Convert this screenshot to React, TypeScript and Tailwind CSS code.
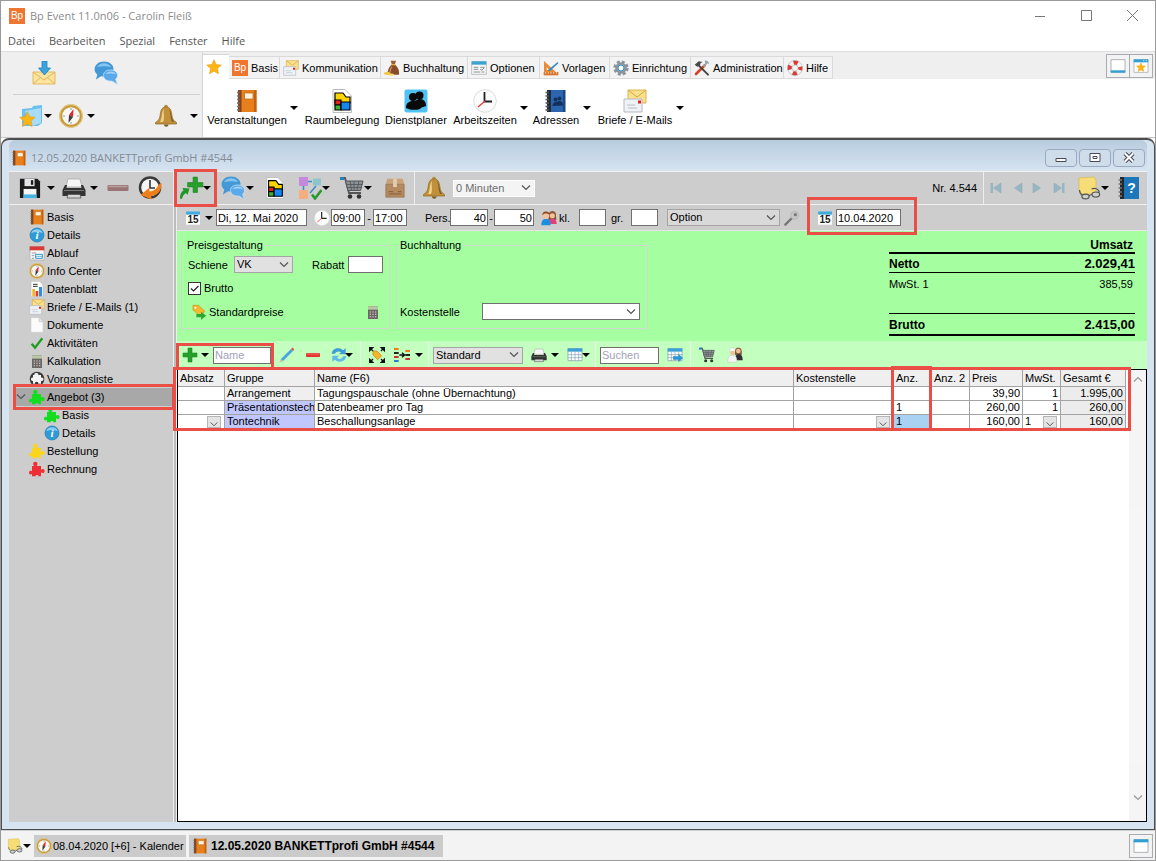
import type { ReactNode } from 'react'
import clsx from 'clsx'

// ── Icons ─────────────────────────────────────────────────────

interface IconProps {
  className?: string
}

function Svg({ className = 'size-4', box = '0 0 24 24', children }: IconProps & { box?: string; children: ReactNode }) {
  return (
    <svg viewBox={box} className={clsx('shrink-0', className)} fill="none" aria-hidden="true">
      {children}
    </svg>
  )
}

function BpLogo() {
  return (
    <span className="flex size-4 shrink-0 items-center justify-center overflow-hidden bg-[#ee7631] text-[10px] leading-4 text-white" aria-hidden="true">
      Bp
    </span>
  )
}

function MailDown({ className }: IconProps) {
  return (
    <Svg className={className}>
      <path d="M1 11h22v12H1z" fill="#fbe3a0" stroke="#e3bb5c" />
      <path d="M1 23l8-7M23 23l-8-7M1 11l11 8 11-8" stroke="#dfb65c" />
      <path d="M10 0h5v7h3.500l-6 7-6-7H10z" fill="#3ba3dc" stroke="#2383bb" strokeWidth=".8" />
    </Svg>
  )
}

function Chat({ className }: IconProps) {
  return (
    <Svg className={className}>
      <path d="M10 .500c5.500 0 9.500 3.200 9.500 7.500s-4 7.700-9.500 7.700c-1 0-2-.1-3-.4L2 18.500l1.300-5C1.700 12.200.600 10.500.600 8.500c0-4.500 4-8 9.400-8z" fill="#4398d6" />
      <path d="M3 6c2-4.500 11-5.500 14 0-4-1-9-1-14 0z" fill="#86c5ee" />
      <path d="M16.500 9c4 0 7 2.200 7 5.300 0 1.700-.9 3-2 4L23.500 23.500l-5.500-3.400c-5 .3-8.500-2-8.500-5.700S12.500 9 16.500 9z" fill="#5aa9ea" stroke="#cfe6f7" strokeWidth=".7" />
      <path d="M11.500 13c2-3 8-3.500 10.500 0-4-.8-7-.8-10.500 0z" fill="#a0d0f5" />
    </Svg>
  )
}

function StarShape({ fill = '#fbb615' }: { fill?: string }) {
  return <path d="M12 1l3.300 7.200 7.700.9-5.700 5.300 1.500 7.800L12 18.400l-6.800 3.800 1.500-7.800L1 9.100l7.700-.9z" fill={fill} stroke="#e39a12" strokeWidth=".8" />
}

function Star({ className }: IconProps) {
  return <Svg className={className}><StarShape /></Svg>
}

function StarFolder({ className }: IconProps) {
  return (
    <Svg className={className}>
      <path d="M3 5l10-1 1-2 9-1v18l-4 3H3z" fill="#6cc0ee" />
      <path d="M6 7l16-3v15l-9 3z" fill="#a9dcf7" />
      <g transform="translate(0 7) scale(.7)"><StarShape /></g>
    </Svg>
  )
}

function Compass({ className }: IconProps) {
  return (
    <Svg className={className}>
      <circle cx="12" cy="12" r="10.300" fill="#f7f7f4" stroke="#c79b3c" strokeWidth="3" />
      <circle cx="12" cy="12" r="11.400" stroke="#e9cf8e" />
      <path d="M12 4v2M12 18v2M4 12h2M18 12h2" stroke="#999" />
      <path d="M14.500 5l-.5 8-4-2z" fill="#e0252b" />
      <path d="M10 11l4 2-4.500 6z" fill="#3c3c3c" />
    </Svg>
  )
}

function Bell({ className }: IconProps) {
  return (
    <Svg className={className}>
      <circle cx="12" cy="2.500" r="1.800" fill="#b98b33" />
      <path d="M12 3c5 0 5.500 5 6 9 .3 3 2 5 4.500 6.500v1.500h-21v-1.500C4 17 5.700 15 6 12c.5-4 1-9 6-9z" fill="#c0903a" stroke="#8c6422" strokeWidth=".7" />
      <path d="M10 5c-2.500 2-1.500 9-4 13h3c2-4 0-9 1-13z" fill="#f0d48c" />
      <path d="M15 5c2 4 1 9 3 13h2c-3-3-2-10-5-13z" fill="#7d5a1f" />
      <path d="M10 20.500h4.500c0 3-4.500 3-4.500 0z" fill="#7d5a1f" />
    </Svg>
  )
}

function Mails({ className }: IconProps) {
  return (
    <Svg className={className}>
      <path d="M5 1h18v13H5z" fill="#fbe08c" stroke="#dcb24e" />
      <path d="M5 1l9 7 9-7" stroke="#cfa544" />
      <path d="M1 10h18v13H1z" fill="#eef1f5" stroke="#b5b9c0" />
      <path d="M15 11.500h3v3h-3z" fill="#dd2222" />
      <path d="M4 16h8M5 19h9" stroke="#bcc2ca" />
    </Svg>
  )
}

function MoneyBag({ className }: IconProps) {
  return (
    <Svg className={className}>
      <path d="M10 1h8l-1.500 5h-5z" fill="#9b5d34" />
      <path d="M11 7h6c4 4 6.500 9 5.500 15h-17C5 16 7 11 11 7z" fill="#8a4b28" />
      <path d="M11 6h6v2h-6z" fill="#e2b23b" />
      <path d="M12 10c-2 2-3 5-3 8" stroke="#c58a5e" strokeWidth="2" />
      <ellipse cx="5" cy="20" rx="5" ry="2.500" fill="#f5c842" />
      <ellipse cx="11" cy="22" rx="4" ry="1.800" fill="#f9dc77" />
    </Svg>
  )
}

function OptionsWindow({ className }: IconProps) {
  return (
    <Svg className={className}>
      <path d="M1 2.500h22v19H1z" fill="#f7f7f7" stroke="#9fa8ae" />
      <path d="M1 2h22v5H1z" fill="#3ba2d4" />
      <path d="M4 11h7M4 14h7M4 18h10M14 11h6M16 18h4" stroke="#8a9298" strokeWidth="1.500" />
      <path d="M14 13.500l2 2 4-4" stroke="#4b4b4b" />
    </Svg>
  )
}

function Rulers({ className }: IconProps) {
  return (
    <Svg className={className}>
      <path d="M1.500 1.500v17h18z" fill="#ec8a32" />
      <path d="M5.500 11v4h4z" fill="#fff" />
      <path d="M22 3L9 14l-2 3 4-1L23 5z" fill="#3489c9" />
      <path d="M1 18h22v5H1z" fill="#d8752a" />
      <path d="M4 18v2.500M8 18v2.500M12 18v2.500M16 18v2.500M20 18v2.500" stroke="#fff" />
    </Svg>
  )
}

function Gear({ className }: IconProps) {
  return (
    <Svg className={className}>
      <circle cx="12" cy="12" r="9.500" stroke="#8a949d" strokeWidth="4" strokeDasharray="4.460 3" />
      <circle cx="12" cy="12" r="7" fill="#aab4bd" stroke="#8a949d" strokeWidth="3.500" />
      <circle cx="12" cy="12" r="4.500" fill="#f6f8fa" stroke="#3889c4" strokeWidth="1.500" />
    </Svg>
  )
}

function Tools({ className }: IconProps) {
  return (
    <Svg className={className}>
      <path d="M3 21L16 8" stroke="#d5422a" strokeWidth="4" strokeLinecap="round" />
      <path d="M13 9l4-4-1-4c3-.5 6 1 7 5l-3-1-4 6z" fill="#9aa1a6" />
      <path d="M7 8l14 14" stroke="#454545" strokeWidth="3" strokeLinecap="round" />
      <path d="M1 7l6-5 6 1-3 1.500L9 8l-4 2z" fill="#4a4a4a" />
    </Svg>
  )
}

function Lifebuoy({ className }: IconProps) {
  return (
    <Svg className={className}>
      <circle cx="12" cy="12" r="8" stroke="#f2f2f2" strokeWidth="6.500" />
      <circle cx="12" cy="12" r="8" stroke="#dc3a33" strokeWidth="6.500" strokeDasharray="6.280 6.280" strokeDashoffset="3.140" />
      <circle cx="12" cy="12" r="11.300" stroke="#a9a9a9" strokeWidth=".8" />
      <circle cx="12" cy="12" r="4.700" stroke="#a9a9a9" strokeWidth=".8" />
    </Svg>
  )
}

function OrangeBook({ className }: IconProps) {
  return (
    <Svg className={className}>
      <path d="M3 1h18.500v22H3z" fill="#e77f1c" />
      <path d="M19 1h2.500v22H19z" fill="#c4620f" />
      <path d="M3 1h3.500v22H3z" fill="#84411a" />
      <path d="M9.500 4h8.500v6H9.500z" fill="#fff3dc" stroke="#b06a24" strokeWidth=".7" />
      <path d="M2 3.500h3M2 7h3M2 10.500h3M2 14h3M2 17.500h3M2 21h3" stroke="#6e6e6e" strokeWidth="1.300" />
    </Svg>
  )
}

function RoomDoc({ className }: IconProps) {
  return (
    <Svg className={className}>
      <path d="M3 .500h12l6.500 6.500v16.500H3z" fill="#fff" stroke="#bdbdbd" />
      <path d="M5 4h8l3 4h4v6H5z" fill="#ffd400" stroke="#000" strokeWidth="1.200" />
      <path d="M5 11h6v5H5z" fill="#e2231a" stroke="#000" strokeWidth="1.200" />
      <path d="M5 16h6v5H5z" fill="#3fb135" stroke="#000" strokeWidth="1.200" />
      <path d="M11 13h9v8h-9z" fill="#1487f0" stroke="#000" strokeWidth="1.200" />
    </Svg>
  )
}

function PeopleTile({ className }: IconProps) {
  return (
    <Svg className={className}>
      <rect x=".5" y=".5" width="23" height="23" rx="2" fill="#4fc1f3" />
      <circle cx="9" cy="8" r="4" fill="#0a0a0a" />
      <circle cx="15.500" cy="6.500" r="4" fill="#0a0a0a" />
      <path d="M2 19c0-5 3-7 7-7s4-2 7-2c4 0 6 3 6 7-3 1.500-5 1-6 3-5 1.500-10 1-14-1z" fill="#0a0a0a" />
    </Svg>
  )
}

function Clock({ className }: IconProps) {
  return (
    <Svg className={className}>
      <circle cx="12" cy="12" r="11.300" fill="#fdfdfd" stroke="#dcdcdc" />
      <path d="M11.500 3v9.500H19" stroke="#222" strokeWidth="1.800" />
      <path d="M12 12l-7 6" stroke="#e23b3b" strokeWidth="1.300" />
    </Svg>
  )
}

function AddressBook({ className }: IconProps) {
  return (
    <Svg className={className}>
      <path d="M3 1h18v22H3z" fill="#2b65b0" />
      <path d="M3 1h4v22H3z" fill="#222b38" />
      <path d="M19 1h2.500v22H19z" fill="#1b4683" />
      <path d="M1.500 3.500H5M1.500 7H5M1.500 10.500H5M1.500 14H5M1.500 17.500H5M1.500 21H5" stroke="#555" strokeWidth="1.300" />
      <circle cx="11.500" cy="10.500" r="2" fill="#12305c" />
      <circle cx="15.500" cy="9.500" r="2" fill="#12305c" />
      <path d="M8.500 17c0-3 1.500-4 3.500-4l3-1c3 0 4 2 4 4.500z" fill="#12305c" />
    </Svg>
  )
}

function WindowPane({ className, foot }: IconProps & { foot?: boolean }) {
  return (
    <Svg className={className}>
      <path d="M1.500 2.500h21v19h-21z" fill="#fff" stroke="#9a9fa5" strokeWidth="1.200" />
      <path d={foot ? 'M1 18.500h22V22H1z' : 'M1 2h22v4.500H1z'} fill="#2f9fd4" />
    </Svg>
  )
}

function WindowStar({ className }: IconProps) {
  return (
    <Svg className={className}>
      <path d="M1.500 2.500h21v19h-21z" fill="#fff" stroke="#9a9fa5" />
      <path d="M1 2h22v4.500H1z" fill="#2f9fd4" />
      <path d="M15 4h2M19 4h2" stroke="#fff" />
      <g transform="translate(4.500 6.500) scale(.62)"><StarShape /></g>
    </Svg>
  )
}

function Save({ className }: IconProps) {
  return (
    <Svg className={className}>
      <path d="M1 2h19l3 3v18H1z" fill="#1b1b1b" />
      <path d="M6 2h11v8H6z" fill="#e3e5e6" />
      <path d="M13 3.500h2.500v5H13z" fill="#1b1b1b" />
      <path d="M5 13h14v10H5z" fill="#f5f5f5" />
      <path d="M5 19h14v4H5z" fill="#45b3e4" />
    </Svg>
  )
}

function Printer({ className }: IconProps) {
  return (
    <Svg className={className}>
      <path d="M6 3h12l2 8H4z" fill="#f7f7f7" stroke="#a9a9a9" strokeWidth=".8" />
      <path d="M3 9h2l-.5 3h15L19 9h2l2.500 5v6H.500v-6z" fill="#333" />
      <path d="M2 14.500h20" stroke="#777" />
      <path d="M6 18.500h12l1 3.500H5z" fill="#d6d6d6" stroke="#555" strokeWidth=".8" />
    </Svg>
  )
}

function Bar({ className, fill }: IconProps & { fill: string }) {
  return (
    <Svg className={className}>
      <rect x="1.500" y="9" width="21" height="6" rx="1.200" fill={fill} />
      <path d="M2.500 10.500h19" stroke="#fff" strokeOpacity=".3" strokeWidth="1.500" />
    </Svg>
  )
}

function HistoryClock({ className }: IconProps) {
  return (
    <Svg className={className}>
      <circle cx="12" cy="11.500" r="10" fill="#f5f5f5" stroke="#3a3a3a" strokeWidth="2.500" />
      <path d="M12 4v8h5" stroke="#333" strokeWidth="1.600" />
      <path d="M23.500 7c.5 8-4 12.500-10.500 13l1 3.500L2.500 19 11 12l.7 3.500c4-.5 7.300-2.500 8.300-6.500z" fill="#ee7d1a" />
    </Svg>
  )
}

function PlusShape() {
  return <path d="M9 1.500h6V9h7.500v6H15v7.500H9V15H1.500V9H9z" fill="#27a02b" stroke="#148018" strokeWidth=".8" />
}

function Plus({ className }: IconProps) {
  return <Svg className={className}><PlusShape /></Svg>
}

function PlusArrow({ className }: IconProps) {
  return (
    <Svg className={className}>
      <g transform="translate(6.500 0) scale(.73)"><PlusShape /></g>
      <path d="M0 22.500c0-4 1-6.500 3.500-8L2.500 12l7 .5-2 6.500-1.500-2C4 18 2.500 20 2 23z" fill="#1f9724" />
    </Svg>
  )
}

function Flow({ className }: IconProps) {
  return (
    <Svg className={className}>
      <path d="M1 1h9v9H1z" fill="#c489dd" />
      <path d="M15 2.500h8v7h-8z" fill="#8fc4cf" />
      <path d="M1 14h9v9H1z" fill="#f4ad7e" />
      <path d="M10 5.500h4M5.500 10v4M18 10l-6 7" stroke="#3b8fc4" strokeWidth="1.600" />
      <path d="M14 18.500l3 4L23.500 14" stroke="#25992b" strokeWidth="2.500" />
    </Svg>
  )
}

function Cart({ className }: IconProps) {
  return (
    <Svg className={className}>
      <path d="M1 2h4l4 15h12" stroke="#555" strokeWidth="1.800" />
      <path d="M5.500 5H23l-2.500 9.500H8z" fill="#8d9296" stroke="#555" />
      <path d="M10 5l1.500 9M14 5v9M19 5l-2 9M6.500 8.500h16M7.500 11.500h14" stroke="#4e5357" strokeWidth=".8" />
      <path d="M0 1h4v3H0z" fill="#267fb6" />
      <circle cx="10" cy="20.500" r="2.300" fill="#333" />
      <circle cx="19" cy="20.500" r="2.300" fill="#333" />
    </Svg>
  )
}

function Box({ className }: IconProps) {
  return (
    <Svg className={className}>
      <path d="M3.500 2h17L22 8H2z" fill="#c9a27a" />
      <path d="M2 8h20v14H2z" fill="#b58a60" stroke="#916a43" strokeWidth=".7" />
      <path d="M10 2h4v9h-4z" fill="#e4cdb0" />
      <path d="M5 16h5M5 18.500h14M15 16h4" stroke="#7e5a36" />
    </Svg>
  )
}

function Calendar15({ className }: IconProps) {
  return (
    <Svg className={className}>
      <path d="M1.500 2h21v20h-21z" fill="#fff" />
      <path d="M1.500 2h21v5h-21z" fill="#45a9da" />
      <text x="12" y="20" textAnchor="middle" fontSize="15" fontWeight="700" fontFamily="Liberation Sans, sans-serif" fill="#222">15</text>
    </Svg>
  )
}

function People({ className }: IconProps) {
  return (
    <Svg className={className}>
      <path d="M11.500 8c0-9 12-8 11 0l.5 7h-12z" fill="#8d5534" />
      <circle cx="17" cy="8.500" r="3.800" fill="#f1c39c" />
      <path d="M11 21c0-6 2-8 6-8s6.500 2 6.500 8z" fill="#e33f7f" />
      <circle cx="7.500" cy="8" r="5" fill="#f1c39c" />
      <path d="M2 8C1 1 14 0 13 8c-2-3-8-4-11 0z" fill="#8e4a22" />
      <path d="M.500 23c0-7 2-9.500 7-9.500s7 2.500 7 9.500z" fill="#1e8fe0" />
    </Svg>
  )
}

function Pin({ className }: IconProps) {
  return (
    <Svg className={className}>
      <path d="M2 22L12 12" stroke="#777" strokeWidth="3.500" strokeLinecap="round" />
      <circle cx="16" cy="8" r="6" fill="#c6c6c6" stroke="#adadad" />
      <circle cx="17" cy="7" r="2.500" fill="#7c7c7c" />
    </Svg>
  )
}

function Notes({ className }: IconProps) {
  return (
    <Svg className={className}>
      <path d="M2 2l15-1 2 3v13l-5 1H5l-3-3z" fill="#f7dd78" stroke="#d8b84a" strokeWidth=".7" />
      <path d="M2.500 14c0 2 1 4 3 5.500M22.500 16.500c-1-4-5-5-8-3.500M12 20c1-1 2-1.500 3-1.500" stroke="#555" strokeWidth="1.200" />
      <ellipse cx="8.500" cy="20.500" rx="3.600" ry="2.400" fill="#cfcfcf" stroke="#555" strokeWidth="1.200" />
      <ellipse cx="18.800" cy="18.500" rx="3.800" ry="2.500" fill="#cfcfcf" stroke="#555" strokeWidth="1.200" />
    </Svg>
  )
}

function HelpBook({ className }: IconProps) {
  return (
    <Svg className={className}>
      <path d="M3 1h19v22H3z" fill="#1c76ba" />
      <path d="M3 1h4v22H3z" fill="#23282e" />
      <path d="M1.500 4H5M1.500 8H5M1.500 12H5M1.500 16H5M1.500 20H5" stroke="#777" strokeWidth="1.300" />
      <text x="14.500" y="16.500" textAnchor="middle" fontSize="14" fontWeight="700" fontFamily="Liberation Sans, sans-serif" fill="#fff">?</text>
    </Svg>
  )
}

function NavArrow({ flip, end }: { flip?: boolean; end?: boolean }) {
  return (
    <Svg className={clsx('size-3', flip && 'rotate-180')}>
      <path d="M2 2l15 10L2 22z" fill="#97b6c4" stroke="#86a8b8" />
      {end && <path d="M18 2h5v20h-5z" fill="#97b6c4" />}
    </Svg>
  )
}

function Info({ className }: IconProps) {
  return (
    <Svg className={className}>
      <circle cx="12" cy="12" r="10.500" fill="#2f9bd6" stroke="#1a79b0" />
      <path d="M3.500 9C5.500 1.500 18.500 1.500 20.500 9c-5-2-12-2-17 0z" fill="#8fd0f2" />
      <text x="12" y="18" textAnchor="middle" fontSize="17" fontStyle="italic" fontWeight="700" fontFamily="Liberation Serif, serif" fill="#fff">i</text>
    </Svg>
  )
}

function Agenda({ className }: IconProps) {
  return (
    <Svg className={className}>
      <path d="M1.500 2.500h21v20h-21z" fill="#fafafa" stroke="#a9a9a9" />
      <path d="M1 2h22v6H1z" fill="#d83a3a" />
      <path d="M4 12h7M4 16h4M4 20h4" stroke="#999" strokeWidth="1.500" />
      <path d="M10 14h10v6H10z" stroke="#3196d0" strokeWidth="1.500" />
      <path d="M10 17h10" stroke="#3196d0" />
    </Svg>
  )
}

function DataSheet({ className }: IconProps) {
  return (
    <Svg className={className}>
      <path d="M3 .500h13l5 5v18H3z" fill="#fff" stroke="#bcbcbc" />
      <path d="M6 5h7M6 8h7" stroke="#333" strokeWidth="1.500" />
      <path d="M5 12h4v11H5z" fill="#f6b21b" />
      <path d="M10 15h4v8h-4z" fill="#dd3b2f" />
      <path d="M15 9h4.500v14H15z" fill="#2e91d6" />
    </Svg>
  )
}

function Page({ className }: IconProps) {
  return (
    <Svg className={className}>
      <path d="M3 1h12l6 6v16H3z" fill="#fbfbfb" stroke="#d0d0d0" />
      <path d="M15 1v6h6" fill="#e4e4e4" stroke="#c5c5c5" />
    </Svg>
  )
}

function Check({ className }: IconProps) {
  return <Svg className={className}><path d="M4 13l5 6L20 5" stroke="#1f9c25" strokeWidth="3.500" /></Svg>
}

function Calculator({ className }: IconProps) {
  return (
    <Svg className={className}>
      <path d="M4.500 3.500h15v19h-15z" fill="#6b6664" />
      <path d="M4.500 3.500h15v5h-15z" fill="#b9c7a4" />
      <path d="M7 12h2M11 12h2M15 12h2M7 15.500h2M11 15.500h2M15 15.500h2M7 19h2M11 19h2M15 19h2" stroke="#d8d4d0" strokeWidth="1.600" />
    </Svg>
  )
}

function PuzzleBall({ className }: IconProps) {
  return (
    <Svg className={className}>
      <circle cx="12" cy="12" r="11" fill="#3a3a3a" />
      <path d="M8 6c-1-4 7-4 6 0h4v4c5-1 5 6 0 5v4h-4c1-4-6-4-5 0H6v-4c-4 1-4-6 0-5V6z" fill="#f3f3f3" />
    </Svg>
  )
}

function Puzzle({ className, fill }: IconProps & { fill: string }) {
  return (
    <Svg className={className}>
      <path
        d="M4.500 7.500H8C5.500 5.500 5.500 1 9.500 1s4 4.500 1.800 6.500H18V13c2.500-2 5.500-1 5.500 2s-3 4-5.500 2v6h-4c.5-2.500-4.500-2.500-4 0H4.500v-3.500c-2 1.500-4.500.5-4.500-2s2.500-3.500 4.500-2z"
        fill={fill}
      />
    </Svg>
  )
}

function TagArrow({ className }: IconProps) {
  return (
    <Svg className={className}>
      <path d="M3 2h8l10 9-7 7L3 9z" fill="#f5b92e" stroke="#c98d1d" />
      <circle cx="6.500" cy="5.500" r="1.500" fill="#fff" />
      <path d="M8 15h7v-3.500l8 6-8 6V20H8z" fill="#2fa636" />
    </Svg>
  )
}

function Pencil({ className }: IconProps) {
  return (
    <Svg className={className}>
      <path d="M1 23l2-5L18 3l3 3L6 21z" fill="#4aa3de" />
      <path d="M1 23l2-5 3 3z" fill="#e6c89a" />
      <path d="M18 3l1.500-1.500C20.500.500 23.500 3.500 22.500 4.500L21 6z" fill="#d9574b" />
    </Svg>
  )
}

function Refresh({ className }: IconProps) {
  return (
    <Svg className={className}>
      <path d="M1 10C2 1 14 0 18 5l4-3v9H12l3-3C12 6 8 6 6 10z" fill="#3d9fd6" />
      <path d="M23 14c-1 9-13 10-17 5l-4 3v-9h10l-3 3c3 3 7 3 9-2z" fill="#62b8e6" />
    </Svg>
  )
}

function ExpandTag({ className }: IconProps) {
  return (
    <Svg className={className}>
      <path d="M6 6h6l7 7-6 6-7-7z" fill="#f2b52b" stroke="#bf8415" />
      <path d="M0 0h8L0 8zM24 0v8l-8-8zM0 24v-8l8 8zM24 24h-8l8-8z" fill="#111" />
      <path d="M2 2l4 4M22 2l-4 4M2 22l4-4M22 22l-4-4" stroke="#111" strokeWidth="2" />
    </Svg>
  )
}

function ColumnsIcon({ className }: IconProps) {
  return (
    <Svg className={className}>
      <path d="M0 3h7M17 6h7" stroke="#ee7d1a" strokeWidth="3" />
      <path d="M0 9h7M17 12h7" stroke="#222" strokeWidth="3" />
      <path d="M0 15h7M17 18h7" stroke="#c83737" strokeWidth="3" />
      <path d="M0 21h7" stroke="#2b7fc4" strokeWidth="3" />
      <path d="M8 12h8M12 8.500L16 12l-4 3.500" stroke="#111" strokeWidth="2" />
    </Svg>
  )
}

function GridIcon({ className, arrow }: IconProps & { arrow?: boolean }) {
  return (
    <Svg className={className}>
      <path d="M1.500 2.500h21v18h-21z" fill="#fff" stroke="#7d98a8" />
      <path d="M1 2h22v5H1z" fill="#3c9fd5" />
      <path d="M1 11.500h22M1 16h22M6.500 7v14M12 7v14M17.500 7v14" stroke="#7fa3b8" />
      {arrow && <path d="M9 14h8v-4l7 6.500-7 6.500v-4H9z" fill="#2f96d6" />}
    </Svg>
  )
}

function Staff({ className }: IconProps) {
  return (
    <Svg className={className}>
      <path d="M12 12c-1-9 1-11 5-11s6 2 5 11z" fill="#8d5a37" />
      <circle cx="17" cy="6" r="3.500" fill="#edc29c" />
      <path d="M12 20c0-7 2-9 5.500-9s6 2 6 9z" fill="#2e2e34" />
      <path d="M4 4c-1-4 9-4 8 0v3H4z" fill="#fafafa" stroke="#bbb" strokeWidth=".6" />
      <circle cx="8" cy="9" r="3.300" fill="#edc29c" />
      <path d="M1 23c0-8 2-10.500 7-10.500S15 15 15 23z" fill="#f3f3f3" stroke="#bbb" strokeWidth=".6" />
    </Svg>
  )
}

// ── Shared controls ───────────────────────────────────────────

function Caret({ className }: IconProps) {
  return (
    <Svg box="0 0 8 4" className={clsx('h-1 w-2', className)}>
      <path d="M0 0h8L4 4z" fill="#000" />
    </Svg>
  )
}

function Chevron({ className }: IconProps) {
  return (
    <Svg box="0 0 10 6" className={clsx('h-1.5 w-2.5', className)}>
      <path d="M1 .500l4 4 4-4" stroke="#555" strokeWidth="1.200" />
    </Svg>
  )
}

// Red frame drawn over the control it highlights
function Mark({ className }: IconProps) {
  return <span className={clsx('pointer-events-none absolute z-10 border-3 border-[#e94f47]', className)} />
}

function Tool({ label, className, children }: { label: string; className?: string; children: ReactNode }) {
  return (
    <button aria-label={label} className={clsx('flex shrink-0 items-center', className)}>
      {children}
    </button>
  )
}

function Sep({ className }: IconProps) {
  return <span className={clsx('w-px self-stretch bg-[#ededed]', className)} />
}

function Field({ label, value, className, placeholder }: { label: string; value?: string; className?: string; placeholder?: string }) {
  return (
    <input
      type="text"
      aria-label={label}
      defaultValue={value}
      placeholder={placeholder}
      className={clsx('h-[17px] shrink-0 border border-[#707070] bg-white px-px leading-none placeholder:text-[#a39fbd]', className)}
    />
  )
}

function Select({ label, value, className, tone = 'border-[#a5a5a5] bg-[#e1e1e1]' }: { label: string; value: string; className?: string; tone?: string }) {
  return (
    <span className={clsx('relative flex shrink-0 items-center', className)}>
      <select aria-label={label} className={clsx('h-[17px] w-full appearance-none border px-0.5 leading-none', tone)}>
        <option>{value}</option>
      </select>
      <Chevron className="pointer-events-none absolute right-1" />
    </span>
  )
}

// ── Title, menu and ribbon ────────────────────────────────────

const MENU = ['Datei', 'Bearbeiten', 'Spezial', 'Fenster', 'Hilfe']

const TABS = [
  { label: 'Basis', icon: <BpLogo />, width: 'w-[51px]' },
  { label: 'Kommunikation', icon: <Mails />, width: 'w-[101px]' },
  { label: 'Buchhaltung', icon: <MoneyBag />, width: 'w-[87px]' },
  { label: 'Optionen', icon: <OptionsWindow />, width: 'w-[72px]' },
  { label: 'Vorlagen', icon: <Rulers />, width: 'w-[70px]' },
  { label: 'Einrichtung', icon: <Gear />, width: 'w-[81px]' },
  { label: 'Administration', icon: <Tools />, width: 'w-[93px]' },
  { label: 'Hilfe', icon: <Lifebuoy />, width: 'w-[49px]' },
]

const RIBBON = [
  { label: 'Veranstaltungen', icon: <OrangeBook className="size-6" />, width: 'w-[80px]', menu: true, gap: '' },
  { label: 'Raumbelegung', icon: <RoomDoc className="size-6" />, width: 'w-[76px]', menu: false, gap: 'ml-1.5' },
  { label: 'Dienstplaner', icon: <PeopleTile className="size-6" />, width: 'w-[62px]', menu: false, gap: 'ml-[5px]' },
  { label: 'Arbeitszeiten', icon: <Clock className="size-6" />, width: 'w-[64px]', menu: true, gap: 'ml-1.5' },
  { label: 'Adressen', icon: <AddressBook className="size-6" />, width: 'w-[48px]', menu: true, gap: 'ml-1' },
  { label: 'Briefe / E-Mails', icon: <Mails className="size-6" />, width: 'w-[76px]', menu: true, gap: 'ml-1.5' },
]

function TitleBar() {
  return (
    <header>
      <div className="flex h-[29px] items-center pl-2 text-[#8c8c8c]">
        <BpLogo />
        <h1 className="ml-[5px] flex-1 font-['Open_Sans',sans-serif]">Bp Event 11.0n06 - Carolin Fleiß</h1>
        <button aria-label="Minimieren" className="flex w-[46px] justify-center">
          <Svg box="0 0 10 10" className="size-2.5"><path d="M0 5.500h10" stroke="#777" /></Svg>
        </button>
        <button aria-label="Maximieren" className="flex w-[46px] justify-center">
          <Svg box="0 0 11 11" className="size-[11px]"><path d="M.500.500h10v10H.500z" stroke="#777" /></Svg>
        </button>
        <button aria-label="Schließen" className="flex w-[46px] justify-center">
          <Svg box="0 0 11 11" className="size-[11px]"><path d="M0 0l11 11M11 0L0 11" stroke="#777" /></Svg>
        </button>
      </div>
      <nav className="flex h-[22px] items-center gap-3.5 border-b border-[#dedede] pl-[7px] font-['Open_Sans',sans-serif] text-[#555]">
        {MENU.map(m => <button key={m}>{m}</button>)}
      </nav>
    </header>
  )
}

function QuickPanel() {
  return (
    <div className="w-[201px] shrink-0 bg-[#efefef] pl-3 pr-0.5">
      <div className="flex h-[43px] items-center border-b border-[#cfcfcf] pl-[19px]">
        <Tool label="Posteingang"><MailDown className="size-6" /></Tool>
        <Tool label="Chat" className="ml-[38px]"><Chat className="size-6" /></Tool>
      </div>
      <div className="flex h-[42px] items-center pl-1.5">
        <Tool label="Favoriten" className="gap-px"><StarFolder className="size-6" /><Caret /></Tool>
        <Tool label="Kompass" className="ml-[7px] gap-1"><Compass className="size-6" /><Caret /></Tool>
        <Tool label="Erinnerungen" className="ml-auto gap-3 pr-0.5"><Bell className="size-6" /><Caret /></Tool>
      </div>
    </div>
  )
}

function Ribbon() {
  return (
    <div className="flex border-b border-[#c4c4c4] bg-[#efefef]">
      <QuickPanel />
      <div className="flex min-w-0 flex-1 flex-col border-l border-[#d5d5d5]">
        <div className="flex h-[27px] items-end pt-0.5">
          <button aria-label="Favoriten" className="flex h-[25px] w-[26px] items-center justify-center border-t border-[#d5d5d5] bg-white pr-1">
            <Star />
          </button>
          {TABS.map(t => (
            <button
              key={t.label}
              className={clsx('flex h-[23px] shrink-0 items-center gap-[3px] whitespace-nowrap border border-l-0 border-[#dadada] bg-[#f3f3f3] pl-[3px]', t.width)}
            >
              {t.icon}
              {t.label}
            </button>
          ))}
          <div className="ml-auto mr-0.5 flex self-start">
            <Tool label="Leiste unten" className="size-6 justify-center border border-[#a9abb0] bg-[#f3f3f3]"><WindowPane foot /></Tool>
            <Tool label="Fensterfavorit" className="-ml-px size-6 justify-center border border-[#a9abb0] bg-[#f3f3f3]"><WindowStar /></Tool>
          </div>
        </div>
        <div className="flex flex-1 items-center bg-white pl-1">
          {RIBBON.map(r => (
            <div key={r.label} className={clsx('flex items-center', r.gap)}>
              <button className={clsx('flex flex-col items-center whitespace-nowrap leading-3.5', r.width)}>
                {r.icon}
                {r.label}
              </button>
              {r.menu && <Caret className="ml-[3px]" />}
            </div>
          ))}
        </div>
      </div>
    </div>
  )
}

// ── Event window: toolbars ────────────────────────────────────

function WindowTitle() {
  const button = 'flex h-[18px] w-8 items-center justify-center rounded-sm border border-[#9aa9c2] bg-[#cfdcea]'
  return (
    <div className="flex h-[31px] items-center rounded-t-md bg-linear-to-b from-[#b8ccde] to-[#d6e3f1] pl-0.5 pr-0.5 pt-[5px]">
      <OrangeBook />
      <h2 className="ml-1 flex-1 font-['Open_Sans',sans-serif] text-[#858b94]">12.05.2020 BANKETTprofi GmbH #4544</h2>
      <div className="flex gap-0.5">
        <button aria-label="Minimieren" className={button}>
          <Svg box="0 0 12 12" className="size-3"><path d="M1 6.500h10v3H1z" fill="#fff" stroke="#444b5a" /></Svg>
        </button>
        <button aria-label="Wiederherstellen" className={button}>
          <Svg box="0 0 12 12" className="size-3"><path d="M1 1.500h10v8H1z" fill="#fff" stroke="#444b5a" /><path d="M4 4.500h4v2H4z" stroke="#444b5a" /></Svg>
        </button>
        <button aria-label="Schließen" className={button}>
          <Svg box="0 0 12 12" className="size-3">
            <path d="M2 1.500l8 8M10 1.500l-8 8" stroke="#444b5a" strokeWidth="4" />
            <path d="M2 1.500l8 8M10 1.500l-8 8" stroke="#fff" strokeWidth="2" />
          </Svg>
        </button>
      </div>
    </div>
  )
}

function MainToolbar() {
  return (
    <div className="flex h-[33px] shrink-0 items-center border-b border-[#f0f0f0]">
      <div className="flex w-[164px] shrink-0 items-center pl-2.5">
        <Tool label="Speichern" className="gap-1.5"><Save className="size-[22px]" /><Caret /></Tool>
        <Tool label="Drucken" className="ml-[7px] gap-1"><Printer className="size-6" /><Caret /></Tool>
        <Tool label="Löschen" className="ml-2"><Bar className="size-6" fill="#9a7575" /></Tool>
        <Tool label="Verlauf" className="ml-2"><HistoryClock className="size-6" /></Tool>
      </div>
      <Sep />
      <span className="relative ml-1.5 flex">
        <Tool label="Neu"><PlusArrow className="size-6" /><Caret className="-ml-px" /></Tool>
        <Mark className="-bottom-[7px] -left-1.5 -right-1.5 -top-[7px]" />
      </span>
      <Tool label="Kommunikation" className="ml-2.5"><Chat className="size-6" /><Caret className="ml-px" /></Tool>
      <Tool label="Raumbelegung" className="ml-2.5"><RoomDoc className="size-[22px]" /></Tool>
      <Tool label="Ablauf" className="ml-3"><Flow className="size-6" /><Caret /></Tool>
      <Tool label="Warenkorb" className="ml-2.5"><Cart className="size-6" /><Caret /></Tool>
      <Tool label="Paket" className="ml-3"><Box className="size-[22px]" /></Tool>
      <Sep className="ml-2" />
      <Tool label="Erinnerung" className="ml-[7px]"><Bell className="size-6" /></Tool>
      <Select label="Erinnerung in" value="0 Minuten" className="ml-[7px] w-[82px] text-[#6d6d6d]" tone="border-white bg-[#f4f4f4]" />
      <span className="ml-auto">Nr. 4.544</span>
      <Sep className="ml-1.5" />
      <Tool label="Erster" className="ml-1.5"><NavArrow flip end /></Tool>
      <Tool label="Zurück" className="ml-[9px]"><NavArrow flip /></Tool>
      <Tool label="Weiter" className="ml-[9px]"><NavArrow /></Tool>
      <Tool label="Letzter" className="ml-[9px]"><NavArrow end /></Tool>
      <Tool label="Notizen" className="ml-3"><Notes className="size-6" /><Caret /></Tool>
      <Tool label="Hilfe" className="ml-2 mr-1.5"><HelpBook className="size-6" /></Tool>
    </div>
  )
}

function DateBar() {
  return (
    <div className="flex h-[26px] shrink-0 items-center border-b border-[#e6e6e6] pl-2">
      <Tool label="Kalender"><Calendar15 /><Caret className="ml-1" /></Tool>
      <Field label="Datum" value="Di, 12. Mai 2020" className="ml-[3px] w-[91px]" />
      <Clock className="ml-[7px] size-4" />
      <Field label="Beginn" value="09:00" className="ml-px w-[34px]" />
      <span className="w-2 text-center">-</span>
      <Field label="Ende" value="17:00" className="w-[34px]" />
      <label htmlFor="pers" className="ml-[18px] w-[25px] whitespace-nowrap">Pers.</label>
      <input id="pers" type="text" defaultValue="40" className="h-[17px] w-[38px] shrink-0 border border-[#707070] bg-white px-px text-right" />
      <span className="w-[6px] text-center">-</span>
      <Field label="Personen bis" value="50" className="w-[40px] text-right" />
      <People className="ml-[7px] size-4" />
      <label htmlFor="kl" className="ml-0.5 w-5">kl.</label>
      <input id="kl" type="text" className="h-[17px] w-[27px] shrink-0 border border-[#707070] bg-white px-px" />
      <label htmlFor="gr" className="ml-[5px] w-5">gr.</label>
      <input id="gr" type="text" className="h-[17px] w-[27px] shrink-0 border border-[#707070] bg-white px-px" />
      <Select label="Status" value="Option" className="ml-[9px] w-[113px]" tone="border-[#a5a5a5] bg-[#d9d9d9]" />
      <Tool label="Fixieren" className="ml-1"><Pin /></Tool>
      <span className="relative ml-[17px] flex items-center gap-[3px]">
        <Calendar15 />
        <Field label="Stichtag" value="10.04.2020" className="w-[65px]" />
        <Mark className="-bottom-[9px] -left-2.5 -right-4 -top-3" />
      </span>
    </div>
  )
}

// ── Sidebar ───────────────────────────────────────────────────

const TREE = [
  { label: 'Basis', icon: <OrangeBook /> },
  { label: 'Details', icon: <Info /> },
  { label: 'Ablauf', icon: <Agenda /> },
  { label: 'Info Center', icon: <Compass /> },
  { label: 'Datenblatt', icon: <DataSheet /> },
  { label: 'Briefe / E-Mails (1)', icon: <Mails /> },
  { label: 'Dokumente', icon: <Page /> },
  { label: 'Aktivitäten', icon: <Check /> },
  { label: 'Kalkulation', icon: <Calculator /> },
  { label: 'Vorgangsliste', icon: <PuzzleBall /> },
  { label: 'Angebot (3)', icon: <Puzzle fill="#14dc1e" />, selected: true },
  { label: 'Basis', icon: <Puzzle fill="#14dc1e" />, nested: true },
  { label: 'Details', icon: <Info />, nested: true },
  { label: 'Bestellung', icon: <Puzzle fill="#fbd51c" /> },
  { label: 'Rechnung', icon: <Puzzle fill="#ee2f36" /> },
]

function Sidebar() {
  return (
    <aside className="w-[164px] shrink-0 pl-[5px] pt-[3px]">
      <ul>
        {TREE.map((n, i) => (
          <li key={i} className={clsx('relative', n.selected && 'bg-[#a8a8a8]')}>
            <button className={clsx('flex h-[18px] w-full items-center gap-0.5 whitespace-nowrap', n.nested ? 'pl-[30px]' : 'pl-[15px]')}>
              {n.icon}
              {n.label}
            </button>
            {n.selected && (
              <>
                <Chevron className="absolute left-0.5 top-1.5" />
                <Mark className="-bottom-1 -left-px -right-0.5 -top-1" />
              </>
            )}
          </li>
        ))}
      </ul>
    </aside>
  )
}

// ── Pricing panel ─────────────────────────────────────────────

function Pricing() {
  const group = 'border border-[#cfdacf] px-1.5'
  return (
    <div className="flex h-[110px] shrink-0 items-start bg-[#a5ffa0] pl-1 pt-[7px]">
      <fieldset className={clsx('h-[91px] w-[208px] shrink-0', group)}>
        <legend className="-ml-0.5 px-px leading-3.5">Preisgestaltung</legend>
        <div className="flex items-center pt-1">
          <span className="w-[46px]">Schiene</span>
          <Select label="Schiene" value="VK" className="w-[59px]" />
          <label htmlFor="rabatt" className="ml-[19px] w-9">Rabatt</label>
          <input id="rabatt" type="text" className="h-[17px] w-[35px] border border-[#707070] bg-white px-px" />
        </div>
        <label className="mt-[7px] flex h-4 items-center gap-[3px]">
          <span className="relative flex">
            <input type="checkbox" defaultChecked className="size-[13px] appearance-none border border-[#333] bg-white" />
            <Svg box="0 0 13 13" className="pointer-events-none absolute size-[13px]"><path d="M3 6.500l2.500 2.500L10.500 4" stroke="#222" strokeWidth="1.200" /></Svg>
          </span>
          Brutto
        </label>
        <div className="mt-2 flex items-center justify-between pl-[3px] pr-0.5">
          <button className="flex items-center gap-0.5"><TagArrow />Standardpreise</button>
          <Tool label="Rechner"><Calculator className="size-4" /></Tool>
        </div>
      </fieldset>
      <fieldset className={clsx('ml-1.5 h-[91px] w-[252px] shrink-0', group)}>
        <legend className="-ml-1 px-px leading-3.5">Buchhaltung</legend>
        <div className="-ml-1 flex items-center pl-px pt-[51px]">
          <span className="w-[82px]">Kostenstelle</span>
          <Select label="Kostenstelle" value="" className="w-[158px]" tone="border-[#707070] bg-white" />
        </div>
      </fieldset>
      <table className="-mt-px ml-auto mr-3 w-[246px] text-xs leading-3.5">
        <thead>
          <tr className="h-4 border-b-2 border-black">
            <th />
            <th className="pr-0.5 text-right">Umsatz</th>
          </tr>
        </thead>
        <tbody>
          <tr className="h-[19px] border-b border-black font-bold">
            <td className="pt-0.5">Netto</td>
            <td className="pt-0.5 text-right text-[13px]">2.029,41</td>
          </tr>
          <tr className="h-[41px] border-b border-black align-top text-[11px]">
            <td className="pt-1">MwSt. 1</td>
            <td className="pr-0.5 pt-1 text-right">385,59</td>
          </tr>
          <tr className="h-[22px] border-b-2 border-black font-bold">
            <td className="pt-0.5">Brutto</td>
            <td className="pt-0.5 text-right text-[13px]">2.415,00</td>
          </tr>
        </tbody>
      </table>
    </div>
  )
}

// ── Positions ─────────────────────────────────────────────────

function GridToolbar() {
  return (
    <div className="flex h-7 shrink-0 items-center bg-[#c3ffbf] pl-[5px]">
      <span className="relative flex items-center">
        <Tool label="Position hinzufügen"><Plus /><Caret className="ml-[3px]" /></Tool>
        <Field label="Name" placeholder="Name" className="ml-1 w-[58px]" />
        <Mark className="-bottom-1.5 -left-1.5 -right-[3px] -top-1" />
      </span>
      <Tool label="Bearbeiten" className="ml-2"><Pencil /></Tool>
      <Tool label="Entfernen" className="ml-2.5"><Bar fill="#e3362d" /></Tool>
      <Tool label="Aktualisieren" className="ml-2.5"><Refresh className="size-4" /><Caret className="-ml-0.5" /></Tool>
      <Sep className="ml-[7px]" />
      <Tool label="Erweitern" className="ml-2"><ExpandTag /></Tool>
      <Tool label="Spalten" className="ml-[9px]"><ColumnsIcon /><Caret className="ml-[5px]" /></Tool>
      <Sep className="ml-[5px]" />
      <Select label="Ansicht" value="Standard" className="ml-1 w-[90px]" />
      <Tool label="Drucken" className="ml-2"><Printer /><Caret className="ml-1" /></Tool>
      <Tool label="Tabelle" className="ml-2"><GridIcon /><Caret className="-ml-px" /></Tool>
      <Sep className="ml-[5px]" />
      <Field label="Suchen" placeholder="Suchen" className="ml-1 w-[59px]" />
      <Tool label="Weitersuchen" className="ml-2"><GridIcon arrow /></Tool>
      <Sep className="ml-[7px]" />
      <Tool label="Warenkorb" className="ml-2"><Cart /></Tool>
      <Tool label="Personal" className="ml-3"><Staff /></Tool>
    </div>
  )
}

const COLUMNS = [
  { label: 'Absatz', width: 'w-[47px]' },
  { label: 'Gruppe', width: 'w-[90px]' },
  { label: 'Name (F6)', width: '' },
  { label: 'Kostenstelle', width: 'w-[100px]' },
  { label: 'Anz.', width: 'w-[38px]' },
  { label: 'Anz. 2', width: 'w-[38px]' },
  { label: 'Preis', width: 'w-[53px]' },
  { label: 'MwSt.', width: 'w-[38px]' },
  { label: 'Gesamt €', width: 'w-[65px]' },
]

const ROWS = [
  { group: 'Arrangement', tone: 'bg-[#efefef]', name: 'Tagungspauschale (ohne Übernachtung)', count: '', price: '39,90', tax: '1', total: '1.995,00' },
  { group: 'Präsentationstechn', tone: 'bg-[#c0c7ff]', name: 'Datenbeamer pro Tag', count: '1', price: '260,00', tax: '1', total: '260,00' },
  { group: 'Tontechnik', tone: 'bg-[#c0c7ff]', name: 'Beschallungsanlage', count: '1', price: '160,00', tax: '1', total: '160,00', active: true },
]

function CellDrop({ label }: { label: string }) {
  return (
    <button aria-label={label} className="absolute bottom-0 right-[3px] flex h-3 w-3.5 items-end justify-center border border-[#b5b5b5] bg-[#e4e4e4]">
      <Chevron className="h-[5px] w-2" />
    </button>
  )
}

function Positions() {
  const cell = 'relative h-3.5 overflow-hidden whitespace-nowrap border-b border-r border-[#a3a3a3] px-0.5 py-0 leading-[13px]'
  return (
    <div className="relative flex min-h-0 flex-1 border border-black bg-white">
      <div className="relative min-w-0 flex-1">
        <table className="w-[calc(100%-3px)] table-fixed border-separate border-spacing-0">
          <thead>
            <tr>
              {COLUMNS.map(c => (
                <th key={c.label} className={clsx('relative h-[17px] whitespace-nowrap border-b border-r border-[#a3a3a3] bg-[#efefef] px-0.5 py-0 text-left font-normal leading-4', c.width)}>
                  {c.label}
                  {c.label === 'Anz.' && <Mark className="-left-[3px] -right-px -top-1 h-[65px]" />}
                </th>
              ))}
            </tr>
          </thead>
          <tbody>
            {ROWS.map(r => (
              <tr key={r.name}>
                <td className={cell}>{r.active && <CellDrop label="Absatz wählen" />}</td>
                <td className={clsx(cell, r.tone)}>{r.group}</td>
                <td className={cell}>{r.name}</td>
                <td className={cell}>{r.active && <CellDrop label="Kostenstelle wählen" />}</td>
                <td className={clsx(cell, r.active && 'bg-[#a9d1f2]')}>{r.count}</td>
                <td className={cell} />
                <td className={clsx(cell, 'text-right')}>{r.price}</td>
                <td className={clsx(cell, !r.active && 'text-right')}>{r.tax}{r.active && <CellDrop label="MwSt. wählen" />}</td>
                <td className={clsx(cell, 'bg-[#ececec] text-right')}>{r.total}</td>
              </tr>
            ))}
          </tbody>
        </table>
        <Mark className="-left-[5px] -right-0.5 -top-[3px] h-16" />
      </div>
      <div className="flex w-[17px] shrink-0 flex-col items-center justify-between bg-[#f0f0f0] pb-5 pt-1.5 opacity-60">
        <Chevron className="rotate-180" />
        <Chevron />
      </div>
    </div>
  )
}

function EventWindow() {
  return (
    <main className="flex flex-1 flex-col rounded-t-lg border border-t-2 border-[#4d4d4d] bg-[#d6e3f1] px-[7px] pb-[7px]">
      <WindowTitle />
      <div className="flex flex-1 flex-col border-t border-[#f0f0f0] bg-[#cdcdcd]">
        <MainToolbar />
        <div className="flex flex-1">
          <Sidebar />
          <div className="w-1 shrink-0 border-x border-[#eeeeee] bg-[#bdbdbd]" />
          <div className="flex min-w-0 flex-1 flex-col">
            <DateBar />
            <Pricing />
            <GridToolbar />
            <Positions />
          </div>
        </div>
      </div>
    </main>
  )
}

// ── Taskbar ───────────────────────────────────────────────────

function Taskbar() {
  return (
    <footer className="flex h-[30px] shrink-0 items-center border-t border-[#cfcfcf] bg-[#f3f3f3] pl-1.5 pr-0.5">
      <Tool label="Notizen"><Notes className="size-4" /><Caret /></Tool>
      <button className="ml-[3px] flex h-[22px] w-[152px] items-center gap-px whitespace-nowrap bg-[#cbcbcb] pl-0.5">
        <Compass />
        08.04.2020 [+6] - Kalender
      </button>
      <button className="ml-[3px] flex h-[22px] w-[254px] items-center gap-[3px] whitespace-nowrap bg-[#cbcbcb] pl-[3px] text-xs font-bold">
        <OrangeBook />
        12.05.2020 BANKETTprofi GmbH #4544
      </button>
      <Tool label="Fenster" className="ml-auto size-6 justify-center border border-[#a9abb0]"><WindowPane /></Tool>
    </footer>
  )
}

export default function App() {
  return (
    <div className="flex min-h-screen flex-col border border-[#9a9a9a] bg-white font-['Liberation_Sans',Arial,sans-serif] text-[11px] leading-4 text-black">
      <TitleBar />
      <Ribbon />
      <EventWindow />
      <Taskbar />
    </div>
  )
}
